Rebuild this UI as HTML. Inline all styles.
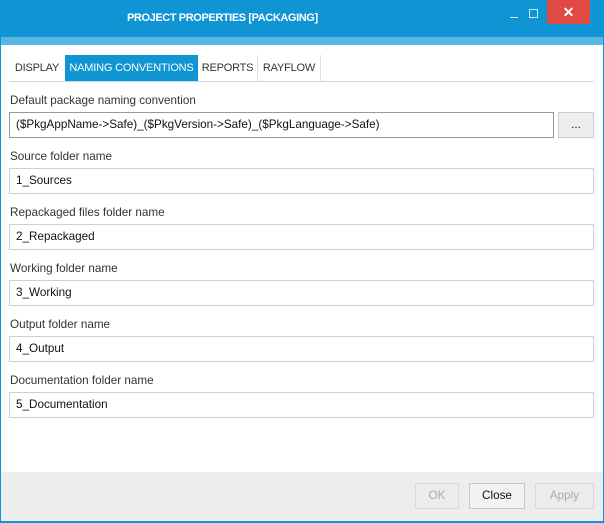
<!DOCTYPE html><html><head><style>
*{box-sizing:border-box;margin:0;padding:0}
body{width:604px;height:523px;overflow:hidden;font-family:"Liberation Sans",sans-serif;font-size:11.7px;color:#222;background:#fff;position:relative}
.title{position:absolute;left:127px;top:0;height:37px;color:#fff;font-weight:bold;font-size:11px;letter-spacing:-0.4px;line-height:37px;white-space:nowrap}
.tbar{position:absolute;left:0;top:0;width:604px;height:37px;background:#0f94d4}
.strip{position:absolute;left:0;top:37px;width:604px;height:8px;background:#59b5e3}
.bl{position:absolute;top:0;bottom:0;width:1px;background:#0f94d4}
.cls{position:absolute;left:547px;top:0;width:43px;height:24px;background:#e04a43;color:#fff;text-align:center;line-height:24px;font-size:14px;font-weight:bold}
.tab{position:absolute;top:55px;height:26px;line-height:26px;text-align:center;color:#333;font-size:11px;white-space:nowrap;letter-spacing:-0.2px}
.tabline{position:absolute;left:9px;top:81px;width:585px;height:1px;background:#c8dbe8}
.lbl{position:absolute;left:10px;color:#333;white-space:nowrap}
.in{position:absolute;left:9px;width:585px;height:26px;border:1px solid #cfcfcf;padding-left:6px;line-height:24px;color:#111;white-space:nowrap}
.foot{position:absolute;left:1px;top:472px;width:602px;height:49px;background:#ededed}
.btn{position:absolute;top:483px;height:26px;border:1px solid #d8d8d8;text-align:center;line-height:24px;color:#aaa;background:#ececec}
</style></head><body>
<div class="tbar"></div>
<div class="title">PROJECT PROPERTIES [PACKAGING]</div>
<div style="position:absolute;left:510px;top:17px;width:8px;height:1px;background:#cfe8f5"></div>
<div style="position:absolute;left:529px;top:9px;width:9px;height:9px;border:1px solid #cfe8f5"></div>
<div class="cls">✕</div>
<div class="strip"></div>
<div class="bl" style="left:0"></div><div class="bl" style="right:0"></div>
<div class="tab" style="left:9px;width:56px">DISPLAY</div>
<div class="tab" style="left:65px;width:133px;background:#0f94d4;color:#fff">NAMING CONVENTIONS</div>
<div class="tab" style="left:198px;width:60px;border-right:1px solid #dde">REPORTS</div>
<div class="tab" style="left:258px;width:63px;border-right:1px solid #dde">RAYFLOW</div>
<div class="tabline"></div>
<div class="lbl" style="top:94px">Default package naming convention</div>
<div class="in" style="top:112px;width:545px;border-color:#999">($PkgAppName-&gt;Safe)_($PkgVersion-&gt;Safe)_($PkgLanguage-&gt;Safe)</div>
<div class="in" style="top:112px;left:558px;width:36px;padding:0;text-align:center;background:#eee;border-color:#ccc">...</div>
<div class="lbl" style="top:150px">Source folder name</div><div class="in" style="top:168px">1_Sources</div>
<div class="lbl" style="top:206px">Repackaged files folder name</div><div class="in" style="top:224px">2_Repackaged</div>
<div class="lbl" style="top:262px">Working folder name</div><div class="in" style="top:280px">3_Working</div>
<div class="lbl" style="top:318px">Output folder name</div><div class="in" style="top:336px">4_Output</div>
<div class="lbl" style="top:374px">Documentation folder name</div><div class="in" style="top:392px">5_Documentation</div>
<div class="foot"></div>
<div class="btn" style="left:415px;width:44px">OK</div>
<div class="btn" style="left:469px;width:56px;color:#111;border-color:#c8c8c8;background:#f2f2f2">Close</div>
<div class="btn" style="left:535px;width:59px">Apply</div>
<div style="position:absolute;left:0;top:521px;width:604px;height:2px;background:#0f94d4"></div>
</body></html>
